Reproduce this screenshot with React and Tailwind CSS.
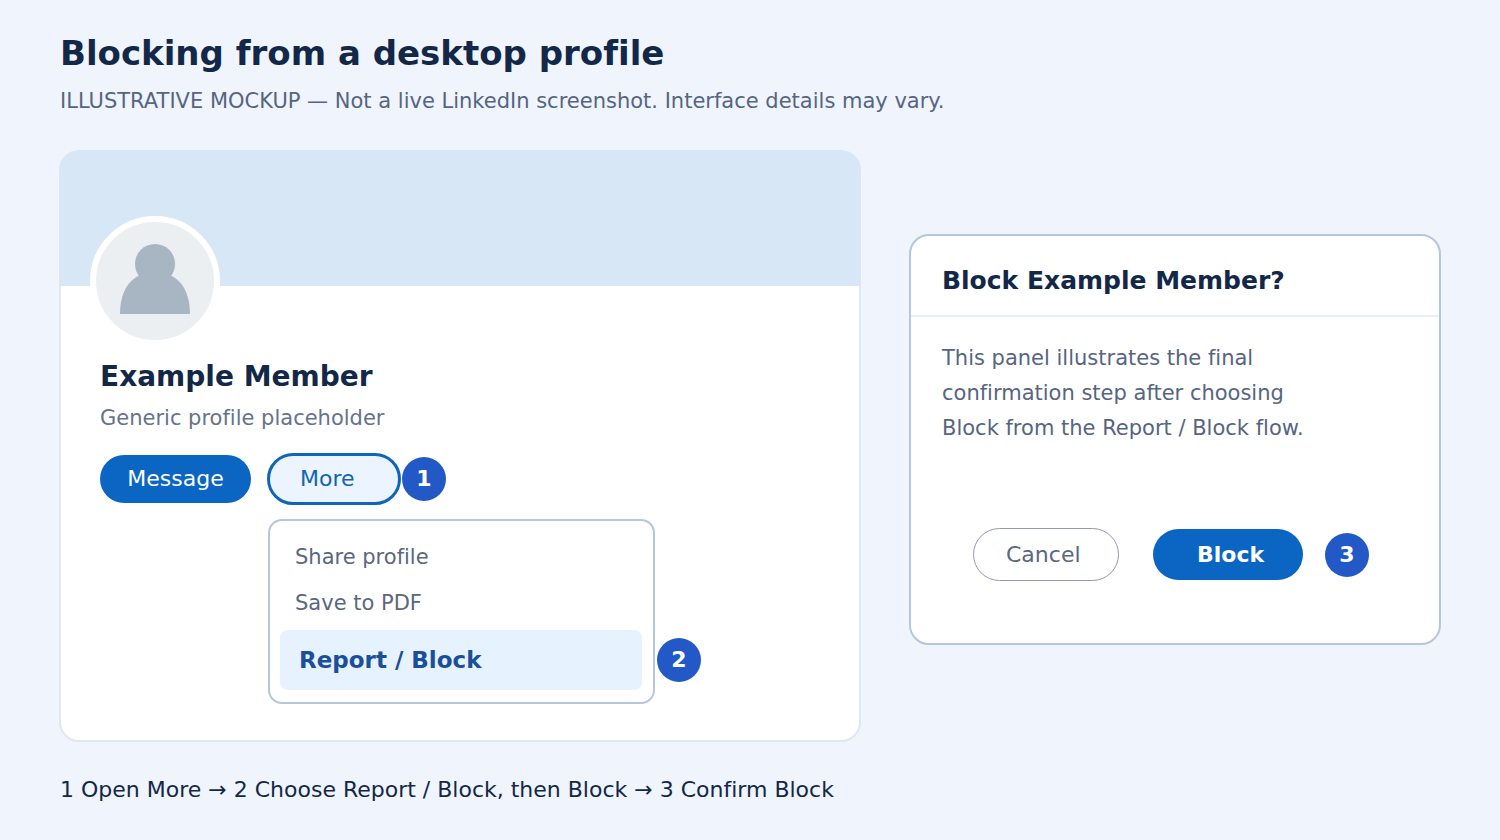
import clsx from "clsx";

const FONT = "font-['DejaVu_Sans',sans-serif]";

const MENU_ITEMS = [
    { label: "Share profile" },
    { label: "Save to PDF" },
    { label: "Report / Block", active: true },
];

function StepBadge({ step, className }) {
    return (
        <span className={clsx("flex size-11 shrink-0 items-center justify-center rounded-full bg-[#2359c7] text-[22px] leading-[30px] font-bold text-white", className)}>
            {step}
        </span>
    );
}

function Avatar() {
    return (
        <div className="relative -mt-[70px] -ml-2.5 size-[130px] overflow-hidden rounded-full border-6 border-white bg-[#ebeff2]">
            <svg viewBox="0 0 118 118" className="size-full" fill="#a8b5c3" aria-hidden="true">
                <circle cx="59" cy="42" r="20" />
                <path d="M24 92C24 66 37 50 59 50S94 66 94 92Z" />
            </svg>
        </div>
    );
}

function ProfileMenu() {
    return (
        <ul className="w-[387px] rounded-[14px] border-2 border-[#b5c6dd] bg-white pt-[13px] pr-[11px] pb-3 pl-2.5">
            {MENU_ITEMS.map((item) => (
                <li key={item.label}>
                    <button
                        type="button"
                        className={clsx(
                            "w-full text-left",
                            item.active
                                ? "mt-1 h-15 rounded-lg bg-[#e7f2ff] px-[19px] text-[23px] leading-[30px] font-bold text-[#194f9b]"
                                : "h-[46px] px-[15px] text-[21px] leading-7 text-[#5a6780]"
                        )}
                    >
                        {item.label}
                    </button>
                </li>
            ))}
        </ul>
    );
}

function ProfileCard() {
    return (
        <article>
            <div className="h-[136px] rounded-t-[20px] bg-[#d8e7f6]" />
            <div className="flow-root rounded-b-[20px] border-2 border-t-0 border-[#e0e7f2] bg-white pb-9 pl-[39px]">
                <Avatar />
                <h2 className="mt-[13px] text-[28px] leading-9 font-bold text-[#132848]">Example Member</h2>
                <p className="mt-[9px] text-[21px] leading-7 text-[#66738a]">Generic profile placeholder</p>

                <div className="mt-[21px] flex items-center">
                    <button type="button" className="h-12 w-[151px] rounded-full bg-[#0a66c2] text-[22px] leading-[30px] text-white">
                        Message
                    </button>
                    <button type="button" className="ml-4 h-[52px] w-[134px] rounded-full border-3 border-[#0f66b8] bg-[#ebf4ff] pl-[30px] text-left text-[22px] leading-[30px] text-[#1164b4]">
                        More
                    </button>
                    <StepBadge step={1} className="ml-px" />
                </div>

                <div className="mt-3.5 ml-[168px] flex items-end gap-0.5">
                    <ProfileMenu />
                    <StepBadge step={2} className="mb-[22px]" />
                </div>
            </div>
        </article>
    );
}

function ConfirmPanel() {
    return (
        <section aria-labelledby="confirm-title" className="mt-[84px] self-start rounded-[20px] border-2 border-[#b5c6dd] bg-white">
            <header className="border-b-2 border-[#e9edf6] px-[31px] pt-[29px] pb-[18px]">
                <h2 id="confirm-title" className="text-[25px] leading-8 font-bold text-[#132848]">Block Example Member?</h2>
            </header>
            <p className="px-[31px] pt-6 text-[21px] leading-[35px] text-[#566581]">
                This panel illustrates the final
                <br />
                confirmation step after choosing
                <br />
                Block from the Report / Block flow.
            </p>
            <div className="mt-[82px] flex items-center pb-[62px] pl-[62px]">
                <button type="button" className="h-[53px] w-[146px] rounded-full border border-[#9298b0] pl-8 text-left text-[22px] leading-7 text-[#5a6780]">
                    Cancel
                </button>
                <button type="button" className="ml-[34px] h-[51px] w-[150px] rounded-full bg-[#0a66c2] pl-11 text-left text-[22px] leading-7 font-bold text-white">
                    Block
                </button>
                <StepBadge step={3} className="ml-[22px]" />
            </div>
        </section>
    );
}

export default function App() {
    return (
        <main className={clsx("min-h-screen bg-[#eff4fd] px-[59px] pt-[33px] [font-variant-ligatures:none]", FONT)}>
            <header className="px-px">
                <h1 className="text-[34px] leading-10 font-bold text-[#132848]">Blocking from a desktop profile</h1>
                <p className="mt-3.5 text-[21px] leading-7 text-[#566581]">
                    ILLUSTRATIVE MOCKUP — Not a live LinkedIn screenshot. Interface details may vary.
                </p>
            </header>

            <div className="mt-[35px] grid grid-cols-[401fr_266fr] gap-12">
                <ProfileCard />
                <ConfirmPanel />
            </div>

            <p className="mt-[34px] px-px text-[22px] leading-7 text-[#132848]">
                1 Open More → 2 Choose Report / Block, then Block → 3 Confirm Block
            </p>
        </main>
    );
}
